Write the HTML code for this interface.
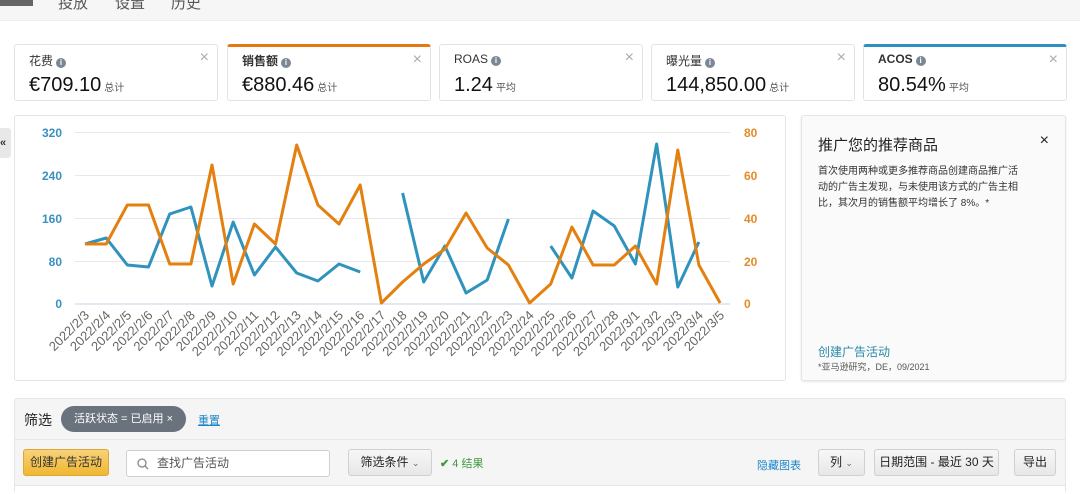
<!DOCTYPE html>
<html><head><meta charset="utf-8"><style>
*{box-sizing:border-box;margin:0;padding:0}
body{width:1080px;height:494px;overflow:hidden;background:#fff;font-family:"Liberation Sans","Noto Sans CJK SC",sans-serif;color:#111;position:relative}
.nav{position:absolute;left:0;top:0;width:1080px;height:21px;background:#f6f6f6;border-bottom:1px solid #eee}
.nav span{position:absolute;top:-8px;font-size:15px;color:#555}
.card{position:absolute;top:44px;width:204px;height:57px;border:1px solid #e3e3e3;border-radius:3px;background:#fff}
.card .t{position:absolute;left:14px;top:7px;font-size:12px;color:#333}
.card .t b{font-weight:bold}
.i{display:inline-block;width:10px;height:10px;border-radius:50%;background:#7b8794;color:#fff;font-size:8px;line-height:10px;text-align:center;font-weight:bold;vertical-align:0;margin-left:3px}
.card .x{position:absolute;right:8px;top:4px;font-size:16px;color:#aaa}
.card .v{position:absolute;left:14px;top:29px;font-size:20px;color:#111}
.card .v small{font-size:10px;color:#555;margin-left:3px}
.panel{position:absolute;border:1px solid #e5e5e5;border-radius:3px;background:#fff}
.btn{position:absolute;top:449px;height:27px;border:1px solid #d0d0d0;border-radius:3px;background:linear-gradient(#f7f7f7,#e7e7e7);font-size:12px;color:#222;line-height:25px;text-align:center}
</style></head><body>
<div class="nav"><span style="left:0;top:-6px;width:33px;height:12px;background:#666;display:block"></span><span style="left:58px">投放</span><span style="left:115px">设置</span><span style="left:171px">历史</span></div>

<div class="card" style="left:14px"><div class="t">花费<span class="i">i</span></div><div class="x">×</div><div class="v">€709.10<small>总计</small></div></div>
<div class="card" style="left:227px;border-top:3px solid #e47911"><div class="t" style="top:5px"><b>销售额</b><span class="i">i</span></div><div class="x">×</div><div class="v" style="top:27px">€880.46<small>总计</small></div></div>
<div class="card" style="left:439px"><div class="t">ROAS<span class="i">i</span></div><div class="x">×</div><div class="v">1.24<small>平均</small></div></div>
<div class="card" style="left:651px"><div class="t">曝光量<span class="i">i</span></div><div class="x">×</div><div class="v">144,850.00<small>总计</small></div></div>
<div class="card" style="left:863px;border-top:3px solid #2f8fc0"><div class="t" style="top:5px"><b>ACOS</b><span class="i">i</span></div><div class="x">×</div><div class="v" style="top:27px">80.54%<small>平均</small></div></div>

<div class="panel" style="left:14px;top:115px;width:772px;height:266px"></div>
<div style="position:absolute;left:0;top:128px;width:11px;height:30px;background:#e8e8e8;border-radius:0 3px 3px 0;font-size:11px;line-height:30px;font-weight:bold;color:#333">«</div>

<svg style="position:absolute;left:0;top:0" width="1080" height="494">
<g stroke="#e8e8e8" stroke-width="1">
<line x1="75" y1="132.5" x2="730" y2="132.5"/><line x1="75" y1="175.5" x2="730" y2="175.5"/><line x1="75" y1="218.5" x2="730" y2="218.5"/><line x1="75" y1="261.5" x2="730" y2="261.5"/></g>
<line x1="75" y1="304" x2="730" y2="304" stroke="#c7d3e8"/>
<g font-size="12" fill="#3a8fc0" font-weight="bold" text-anchor="end"><text x="62" y="137">320</text><text x="62" y="180">240</text><text x="62" y="223">160</text><text x="62" y="266">80</text><text x="62" y="308">0</text></g>
<g font-size="12" fill="#e38a2a" font-weight="bold"><text x="744" y="137">80</text><text x="744" y="180">60</text><text x="744" y="223">40</text><text x="744" y="266">20</text><text x="744" y="308">0</text></g>
<g fill="none" stroke="#2f93bd" stroke-width="3" stroke-linejoin="round">
<polyline points="85,244 106.2,238 127.3,265 148.5,267 169.7,214 190.9,207 212,286 233.2,222 254.4,275 275.5,247 296.7,273 317.9,281 339,264 360.2,272"/>
<polyline points="402.6,193 423.7,282 444.9,246 466.1,293 487.2,280 508.4,219"/>
<polyline points="550.7,246 571.9,278 593.1,211 614.3,226 635.4,264 656.6,144 677.8,287 698.9,242"/>
</g>
<polyline fill="none" stroke="#e3800f" stroke-width="3" stroke-linejoin="round" points="85,244 106.2,244 127.3,205 148.5,205 169.7,264 190.9,264 212,165 233.2,284 254.4,224 275.5,244 296.7,145 317.9,205 339,224 360.2,185 381.4,303 402.6,282 423.7,264 444.9,249 466.1,213 487.2,248 508.4,265 529.6,303 550.7,284 571.9,227 593.1,265 614.3,265 635.4,246 656.6,284 677.8,150 698.9,265 720.1,303"/>
<g font-size="13" fill="#666">
<text transform="translate(90,316) rotate(-45)" text-anchor="end">2022/2/3</text>
<text transform="translate(111.2,316) rotate(-45)" text-anchor="end">2022/2/4</text>
<text transform="translate(132.3,316) rotate(-45)" text-anchor="end">2022/2/5</text>
<text transform="translate(153.5,316) rotate(-45)" text-anchor="end">2022/2/6</text>
<text transform="translate(174.7,316) rotate(-45)" text-anchor="end">2022/2/7</text>
<text transform="translate(195.9,316) rotate(-45)" text-anchor="end">2022/2/8</text>
<text transform="translate(217,316) rotate(-45)" text-anchor="end">2022/2/9</text>
<text transform="translate(238.2,316) rotate(-45)" text-anchor="end">2022/2/10</text>
<text transform="translate(259.4,316) rotate(-45)" text-anchor="end">2022/2/11</text>
<text transform="translate(280.5,316) rotate(-45)" text-anchor="end">2022/2/12</text>
<text transform="translate(301.7,316) rotate(-45)" text-anchor="end">2022/2/13</text>
<text transform="translate(322.9,316) rotate(-45)" text-anchor="end">2022/2/14</text>
<text transform="translate(344,316) rotate(-45)" text-anchor="end">2022/2/15</text>
<text transform="translate(365.2,316) rotate(-45)" text-anchor="end">2022/2/16</text>
<text transform="translate(386.4,316) rotate(-45)" text-anchor="end">2022/2/17</text>
<text transform="translate(407.6,316) rotate(-45)" text-anchor="end">2022/2/18</text>
<text transform="translate(428.7,316) rotate(-45)" text-anchor="end">2022/2/19</text>
<text transform="translate(449.9,316) rotate(-45)" text-anchor="end">2022/2/20</text>
<text transform="translate(471.1,316) rotate(-45)" text-anchor="end">2022/2/21</text>
<text transform="translate(492.2,316) rotate(-45)" text-anchor="end">2022/2/22</text>
<text transform="translate(513.4,316) rotate(-45)" text-anchor="end">2022/2/23</text>
<text transform="translate(534.6,316) rotate(-45)" text-anchor="end">2022/2/24</text>
<text transform="translate(555.7,316) rotate(-45)" text-anchor="end">2022/2/25</text>
<text transform="translate(576.9,316) rotate(-45)" text-anchor="end">2022/2/26</text>
<text transform="translate(598.1,316) rotate(-45)" text-anchor="end">2022/2/27</text>
<text transform="translate(619.3,316) rotate(-45)" text-anchor="end">2022/2/28</text>
<text transform="translate(640.4,316) rotate(-45)" text-anchor="end">2022/3/1</text>
<text transform="translate(661.6,316) rotate(-45)" text-anchor="end">2022/3/2</text>
<text transform="translate(682.8,316) rotate(-45)" text-anchor="end">2022/3/3</text>
<text transform="translate(703.9,316) rotate(-45)" text-anchor="end">2022/3/4</text>
<text transform="translate(725.1,316) rotate(-45)" text-anchor="end">2022/3/5</text>
</g>
</svg>

<div class="panel" style="left:801px;top:115px;width:265px;height:266px;background:#fafafa;box-shadow:0 1px 2px rgba(0,0,0,.1)">
<div style="position:absolute;left:16px;top:18px;font-size:15px;color:#222">推广您的推荐商品</div>
<div style="position:absolute;right:16px;top:16px;font-size:16px;color:#222">×</div>
<div style="position:absolute;left:16px;top:48px;width:200px;font-size:10px;line-height:16px;color:#333">首次使用两种或更多推荐商品创建商品推广活动的广告主发现，与未使用该方式的广告主相比，其次月的销售额平均增长了 8%。*</div>
<div style="position:absolute;left:16px;top:227px;font-size:12px;color:#2a8aa8">创建广告活动</div>
<div style="position:absolute;left:16px;top:244px;font-size:9px;color:#555">*亚马逊研究，DE，09/2021</div>
</div>

<div style="position:absolute;left:14px;top:398px;width:1052px;height:96px;background:#f5f5f5;border:1px solid #e6e6e6;border-radius:3px"></div>
<div style="position:absolute;left:15px;top:439px;width:1050px;height:1px;background:#e6e6e6"></div>
<div style="position:absolute;left:15px;top:485px;width:1050px;height:9px;border-top:1px solid #e6e6e6;background:#fff"></div>
<div style="position:absolute;left:24px;top:410px;font-size:14px;color:#222">筛选</div>
<div style="position:absolute;left:61px;top:406px;width:125px;height:26px;border-radius:13px;background:#6a737d;color:#fff;font-size:11px;line-height:26px;padding-left:13px">活跃状态 = 已启用 ×</div>
<div style="position:absolute;left:198px;top:412px;font-size:11px;color:#1a86c8;text-decoration:underline">重置</div>
<div class="btn" style="left:23px;width:86px;background:linear-gradient(#f8d27a,#f0b730);border-color:#e0a63a;color:#333">创建广告活动</div>
<div style="position:absolute;left:126px;top:450px;width:204px;height:27px;border:1px solid #cfcfcf;border-radius:3px;background:#fff;font-size:12px;color:#555;line-height:25px;padding-left:30px">查找广告活动
<svg style="position:absolute;left:10px;top:7px" width="12" height="12"><circle cx="5" cy="5" r="4" fill="none" stroke="#888" stroke-width="1.3"/><line x1="8" y1="8" x2="11" y2="11" stroke="#888" stroke-width="1.3"/></svg></div>
<div class="btn" style="left:348px;width:84px">筛选条件 <span style="font-size:9px;color:#666">⌄</span></div>
<div style="position:absolute;left:440px;top:455px;font-size:11px;color:#3a9a3a"><span style="font-weight:bold">✔</span> 4 结果</div>
<div style="position:absolute;left:757px;top:457px;font-size:11px;color:#1a86c8">隐藏图表</div>
<div class="btn" style="left:818px;width:47px">列 <span style="font-size:9px;color:#666">⌄</span></div>
<div class="btn" style="left:874px;width:125px">日期范围 - 最近 30 天</div>
<div class="btn" style="left:1014px;width:42px">导出</div>
</body></html>
